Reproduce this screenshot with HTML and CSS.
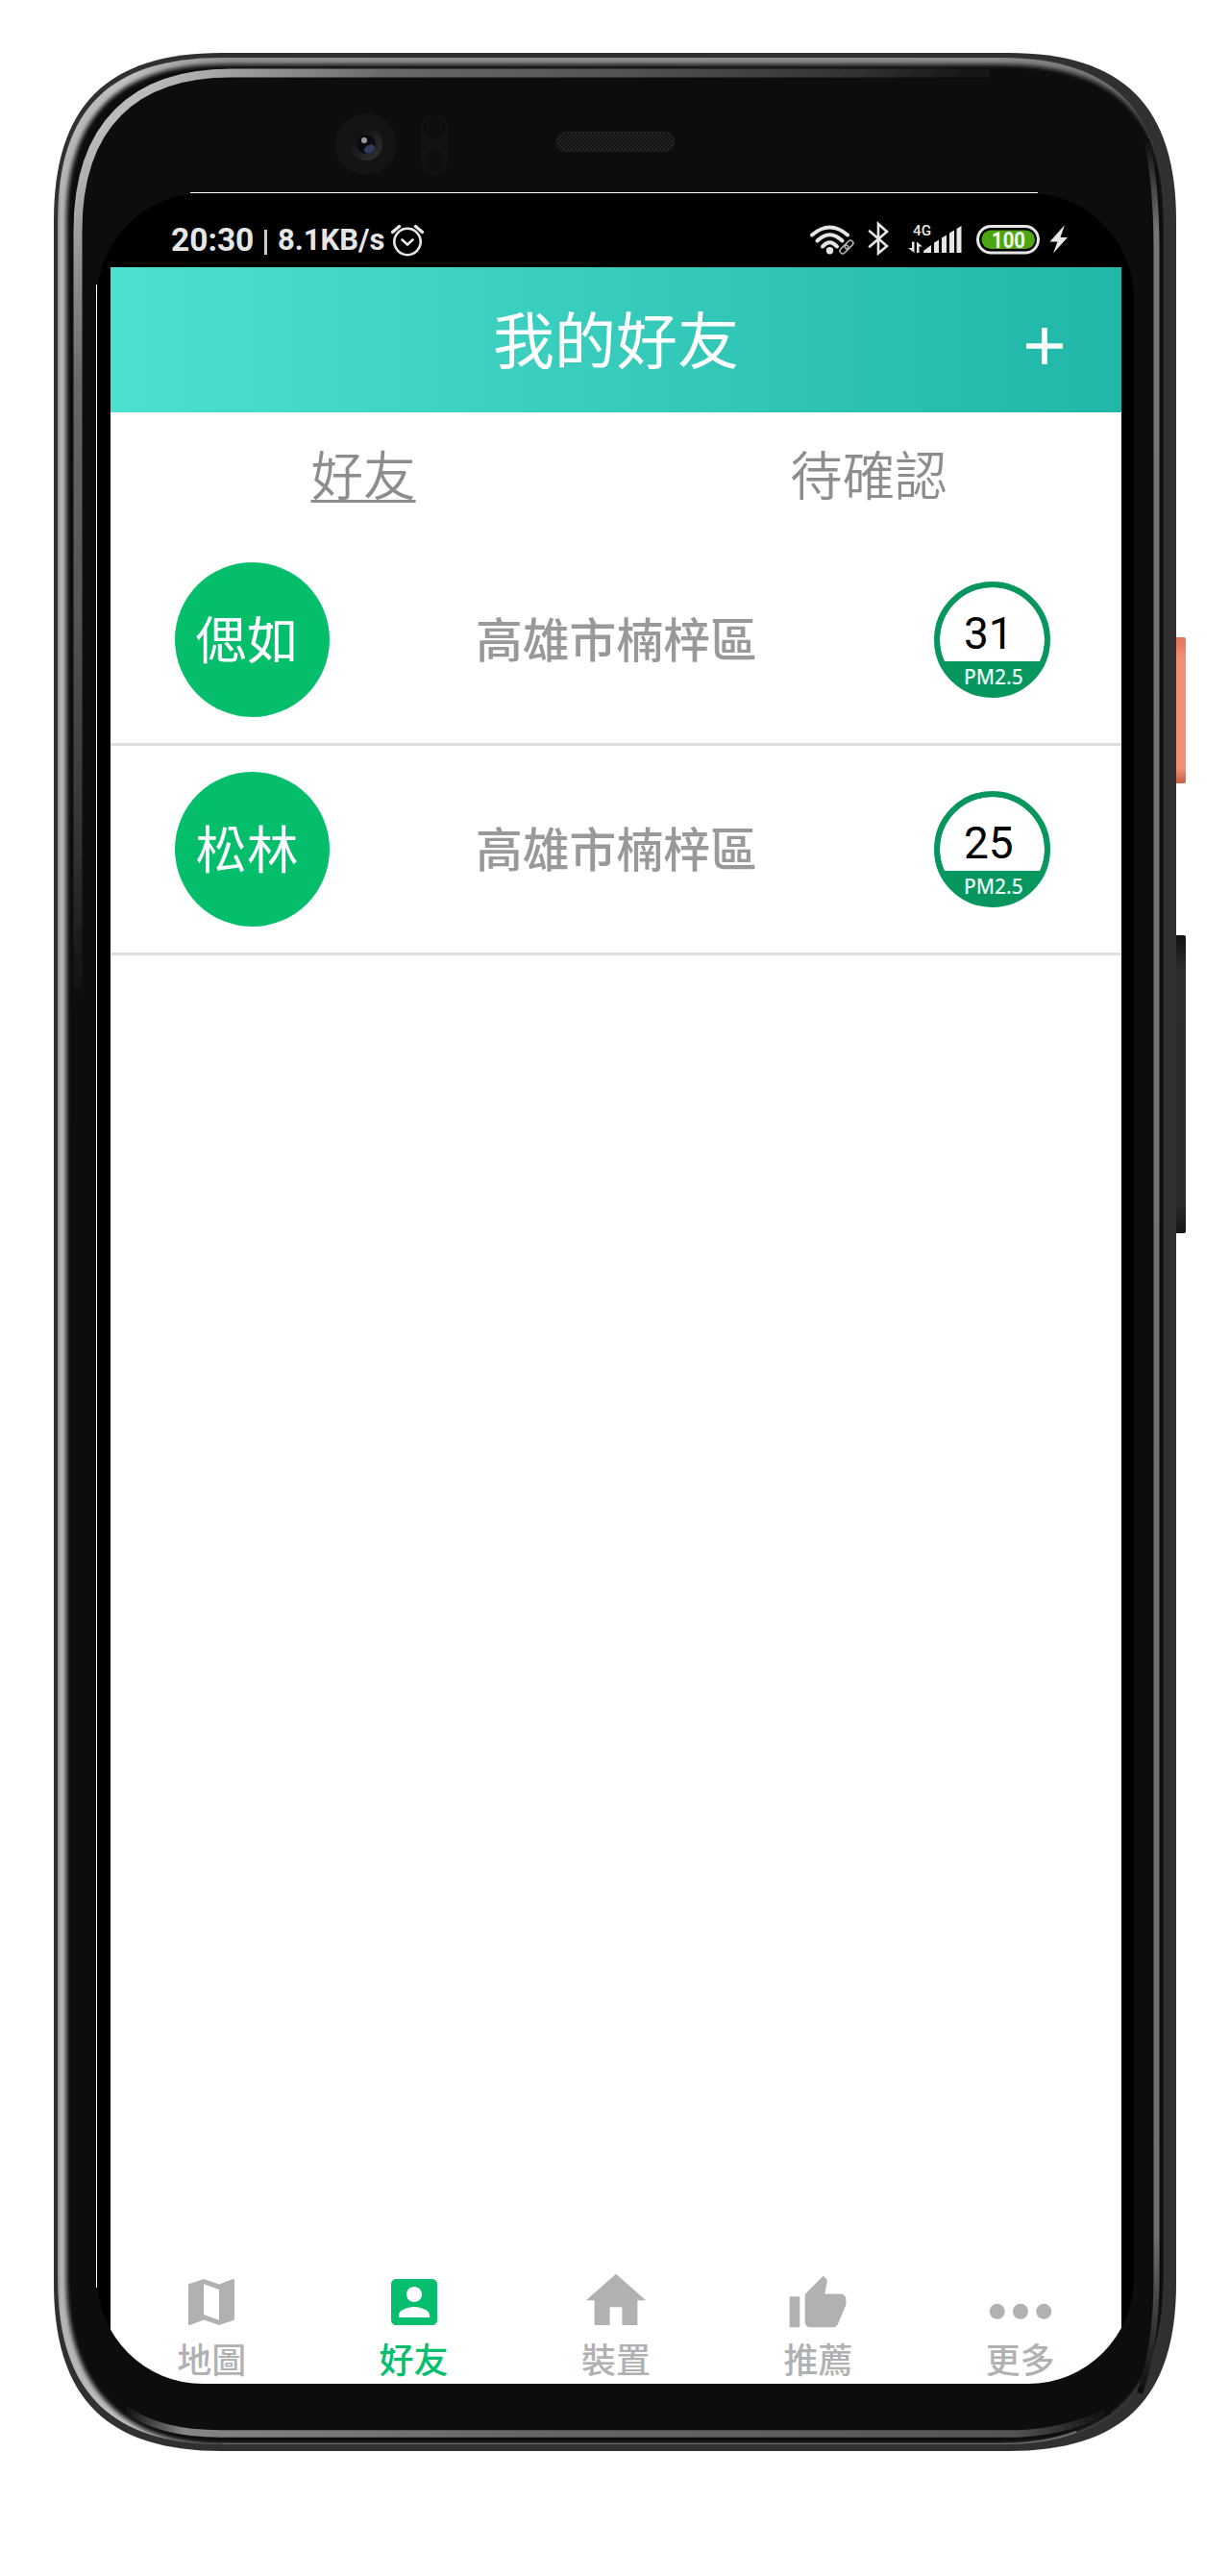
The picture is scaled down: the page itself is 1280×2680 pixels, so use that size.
FILE: index.html
```html
<!DOCTYPE html>
<html lang="zh-Hant">
<head>
<meta charset="utf-8">
<title>我的好友</title>
<link rel="stylesheet" href="styles.css">
</head>
<body>
<div class="stage">
  <svg class="device" viewBox="0 0 1280 2680" aria-hidden="true">
    <defs>
      <linearGradient id="rim" gradientUnits="userSpaceOnUse" x1="60" y1="0" x2="1211" y2="0">
        <stop offset="0" stop-color="#8a8a8a"/><stop offset=".003" stop-color="#b4b4b4"/><stop offset=".06" stop-color="#c0c0c0"/><stop offset=".16" stop-color="#8f8d90"/><stop offset=".85" stop-color="#8a888a"/><stop offset="1" stop-color="#666"/>
      </linearGradient>
      <linearGradient id="shine" gradientUnits="userSpaceOnUse" x1="0" y1="0" x2="600" y2="600">
        <stop offset=".12" stop-color="#8c8c8c"/><stop offset=".2" stop-color="#bcbcbc"/><stop offset=".28" stop-color="#999"/><stop offset=".4" stop-color="#686868"/><stop offset=".6" stop-color="#545454"/><stop offset=".8" stop-color="#333"/><stop offset=".94" stop-color="#0d0d0e"/>
      </linearGradient>
      <linearGradient id="sideShine" gradientUnits="userSpaceOnUse" x1="0" y1="145" x2="0" y2="2490">
        <stop offset="0" stop-color="#0d0d0e"/><stop offset=".04" stop-color="#757577"/><stop offset=".93" stop-color="#707072"/><stop offset=".96" stop-color="#444"/><stop offset="1" stop-color="#0d0d0e"/>
      </linearGradient>
      <linearGradient id="baseShine" gradientUnits="userSpaceOnUse" x1="130" y1="0" x2="1155" y2="0">
        <stop offset="0" stop-color="#0d0d0e"/><stop offset=".06" stop-color="#858585"/><stop offset=".4" stop-color="#666"/><stop offset=".9" stop-color="#555"/><stop offset="1" stop-color="#0d0d0e"/>
      </linearGradient>
      <linearGradient id="power" x1="0" y1="0" x2="0" y2="1">
        <stop offset="0" stop-color="#e6745a"/><stop offset=".15" stop-color="#f08f76"/><stop offset=".9" stop-color="#f08f76"/><stop offset="1" stop-color="#c65f48"/>
      </linearGradient>
      <linearGradient id="volume" x1="0" y1="0" x2="0" y2="1">
        <stop offset="0" stop-color="#121212"/><stop offset=".12" stop-color="#2c2c2c"/><stop offset=".9" stop-color="#2a2a2a"/><stop offset="1" stop-color="#161616"/>
      </linearGradient>
      <linearGradient id="lens" x1="0" y1="0" x2="1" y2="1">
        <stop offset=".2" stop-color="#111112"/><stop offset="1" stop-color="#333337"/>
      </linearGradient>
      <pattern id="mesh" width="4" height="4" patternUnits="userSpaceOnUse">
        <rect width="4" height="4" fill="#111"/><rect width="2" height="2" fill="#242424"/><rect x="2" y="2" width="2" height="2" fill="#242424"/>
      </pattern>
      <filter id="soft2" x="-5%" y="-5%" width="110%" height="110%"><feGaussianBlur stdDeviation="2"/></filter>
      <filter id="soft1" filterUnits="userSpaceOnUse" x="0" y="0" width="1280" height="2680"><feGaussianBlur stdDeviation=".7"/></filter>
      <clipPath id="inner"><path d="M60 230C60 113 115 60 231 60H1042C1158 60 1211 115 1211 230V2370C1211 2488 1158 2543 1042 2543H231C115 2543 60 2488 60 2370Z"/></clipPath>
    </defs>
    <rect x="1216" y="663" width="18" height="152" rx="2" fill="url(#power)"/>
    <rect x="1216" y="973" width="18" height="310" rx="2" fill="url(#volume)"/>
    <path fill="#303030" d="M56 230C56 110 111 55 231 55H1049C1169 55 1224 110 1224 230V2375C1224 2495 1169 2550 1049 2550H231C111 2550 56 2495 56 2375Z"/>
    <g clip-path="url(#inner)">
      <rect x="56" y="55" width="1168" height="2495" fill="url(#rim)"/>
      <path fill="#0d0d0e" filter="url(#soft2)" d="M69 230C69 120 124 67 231 67H1042C1155 68 1213 115 1213 230V2370C1213 2486 1158 2543 1042 2543H231C124 2543 69 2480 69 2370Z"/>
      <path fill="none" stroke="#6c6c6e" stroke-width="2" d="M1120 2530Q1085 2543 1042 2543H231"/>
    </g>
    <g fill="none" filter="url(#soft1)">
      <path stroke="url(#shine)" stroke-width="9" d="M81 1170V240C81 130 140 76 240 76H1030"/>
      <path stroke="url(#sideShine)" stroke-width="6" d="M1193 145Q1203.500 190 1203.500 260V2370Q1203.500 2440 1186 2490"/>
      <path stroke="url(#baseShine)" stroke-width="7.500" d="M130 2506Q165 2532 230 2532H1060Q1110 2530 1155 2508"/>
    </g>
    <circle cx="381" cy="150" r="32" fill="#141414"/>
    <circle cx="381" cy="150" r="17" fill="url(#lens)"/>
    <circle cx="381" cy="150" r="10" fill="#0c0c10"/>
    <ellipse cx="384.500" cy="155" rx="6" ry="4" fill="#303b5c" transform="rotate(-30 384.500 155)" filter="url(#soft1)"/>
    <circle cx="379" cy="146" r="3" fill="#999" filter="url(#soft1)"/>
    <rect x="438" y="120" width="28" height="62" rx="14" fill="#121211"/>
    <circle cx="452" cy="133" r="11" fill="#0e0e0e"/><circle cx="452" cy="168" r="11" fill="#0e0e0e"/>
    <rect x="579.500" y="137.500" width="122" height="20" rx="9" fill="url(#mesh)" stroke="#202020"/>
    <path stroke="#fff" fill="none" d="M198 200.500H1080M100.500 296V2380"/>
  </svg>

  <div class="screen">
    <div class="statusbar">
      <span class="clock">20:30</span><span class="bar"></span><span class="speed">8.1KB/s</span>
      <svg class="alarm" viewBox="0 0 34 34" fill="none" stroke="#e6e6e6" stroke-width="2.600" stroke-linecap="round"><circle cx="17" cy="18.500" r="13.700"/><path d="M11.500 16.500L17 21.500L22.500 16.500"/><path d="M1.500 8.500L8.500 2.500M25.500 2.500L32.500 8.500" stroke-width="3.400"/></svg>
      <svg class="signals" viewBox="0 0 270 40" fill="none" stroke="#e6e6e6" stroke-linecap="round">
        <g stroke-width="4"><path d="M2 14.500Q20.500 -1.500 39 14.500"/><path d="M7.500 20.500Q20.500 8 33.500 20.500"/><path d="M13 26.500Q20.500 18 28 26.500"/></g>
        <circle cx="20.500" cy="30.800" r="3.700" fill="#e6e6e6" stroke="none"/>
        <g stroke-width="1.600" stroke="#b5b5b5" transform="rotate(-45 38 27)"><rect x="29.500" y="24.200" width="10" height="5.600" rx="2.800"/><rect x="36.500" y="24.200" width="10" height="5.600" rx="2.800"/></g>
        <path d="M62 10.500L80 26L71 33.500V3L80 11L62 26.500" stroke-width="2.600" stroke-linejoin="miter"/>
        <text class="net" x="107" y="14.500" textLength="19" lengthAdjust="spacingAndGlyphs">4G</text>
        <g fill="#e6e6e6" stroke="none">
          <path d="M106 21.500h2.500V33L102 28h4zM111 33V21.500l6 5h-3.500V33z"/>
          <path d="M118 33V31L126 25V33zM129 22.500l5-3V33h-5zM137 17.500l5-3V33h-5zM145 12.500l5-3V33h-5zM152.500 8l5-3V33h-5z"/>
        </g>
        <rect x="174.500" y="5.500" width="63" height="27.500" rx="13.700" stroke-width="3"/>
        <rect x="178.500" y="9.500" width="55.500" height="19.500" rx="9.700" fill="#4da512" stroke="none"/>
        <text class="charge" x="189" y="28" textLength="35" lengthAdjust="spacingAndGlyphs">100</text>
        <path fill="#e6e6e6" stroke="none" d="M265 4L249.500 21.500H257.500L253 33.500L268 17H260.500Z"/>
      </svg>
    </div>
    <main class="app">
      <header class="header">
        <h1 class="title">我的好友</h1>
        <svg class="plus" viewBox="0 0 38 38"><path d="M19 0V38M0 19H38" stroke="#fff" stroke-width="5.600"/></svg>
      </header>
      <nav class="tabs"><a class="tab current">好友</a><a class="tab">待確認</a></nav>
      <ul class="friends">
        <li class="friend"><span class="avatar">偲如</span><span class="place">高雄市楠梓區</span><span class="gauge"><b class="value">31</b><small class="unit">PM2.5</small></span></li>
        <li class="friend"><span class="avatar">松林</span><span class="place">高雄市楠梓區</span><span class="gauge"><b class="value">25</b><small class="unit">PM2.5</small></span></li>
      </ul>
      <nav class="dock">
        <a class="item"><svg viewBox="0 0 24 24"><path d="M20.500 3l-.16.03L15 5.100 9 3 3.360 4.900c-.21.07-.36.25-.36.48V20.500c0 .28.22.5.5.5l.16-.03L9 18.900l6 2.100 5.640-1.900c.21-.07.36-.25.36-.48V3.500c0-.28-.22-.5-.5-.5zM15 19l-6-2.110V5l6 2.110V19z"/></svg><span class="label">地圖</span></a>
        <a class="item active"><svg viewBox="0 0 24 24"><path d="M3 5v14c0 1.100.89 2 2 2h14c1.100 0 2-.9 2-2V5c0-1.100-.9-2-2-2H5c-1.110 0-2 .9-2 2zm12 4c0 1.660-1.340 3-3 3s-3-1.340-3-3 1.340-3 3-3 3 1.340 3 3zm-9 8c0-2 4-3.100 6-3.100s6 1.100 6 3.100v1H6v-1z"/></svg><span class="label">好友</span></a>
        <a class="item"><svg viewBox="0 0 24 24"><path d="M9.600 21V14h4.800v7h6V11.300H23.700L12 1 .3 11.300H3.600V21z"/></svg><span class="label">裝置</span></a>
        <a class="item"><svg viewBox="0 0 24 24"><path transform="translate(0 .8)" d="M1 21h4V9H1v12zm22-11c0-1.100-.9-2-2-2h-6.310l.95-4.570.03-.32c0-.41-.17-.79-.44-1.060L14.170 1 7.590 7.590C7.220 7.950 7 8.450 7 9v10c0 1.100.9 2 2 2h9c.83 0 1.540-.5 1.840-1.220l3.020-7.050c.09-.23.14-.47.14-.73v-2z"/></svg><span class="label">推薦</span></a>
        <a class="item"><svg viewBox="0 0 24 24"><circle cx="2.900" cy="15.700" r="3"/><circle cx="12" cy="15.700" r="3"/><circle cx="21.100" cy="15.700" r="3"/></svg><span class="label">更多</span></a>
      </nav>
    </main>
  </div>
</div>
</body>
</html>
```
FILE: styles.css
```css
* { box-sizing: border-box; margin: 0; padding: 0; }
body { background: #fff; font-family: Roboto, "Noto Sans CJK TC", sans-serif; }
.stage { display: grid; width: 1280px; height: 2680px; overflow: hidden; }
.device { grid-area: 1 / 1; width: 1280px; height: 2680px; }
.screen {
  grid-area: 1 / 1; margin: 201px 0 0 101px; width: 1079px; height: 2279px;
  background: #000; border-radius: 110px; overflow: hidden;
  display: flex; flex-direction: column; z-index: 1;
}
.statusbar {
  height: 77px; flex: none; display: flex; align-items: center;
  padding: 20px 67px 0 77px; color: #e6e6e6; font-size: 33.5px; font-weight: 700; line-height: 38px;
}
.clock { width: 88px; }
.bar { width: 3px; height: 26px; background: #ccc; margin: 4px 11px 0 9px; flex: none; }
.speed { width: 118px; font-size: 31px; white-space: nowrap; }
.alarm { width: 34px; height: 34px; flex: none; }
.signals { width: 270px; height: 40px; margin-left: auto; flex: none; }
.net { font: 500 15.500px Roboto, sans-serif; fill: #e6e6e6; stroke: none; }
.charge { font: 700 24px Roboto, sans-serif; fill: #f4fbe9; stroke: none; }
.app { flex: 1; width: 1052px; margin-left: 14px; background: #fff; display: flex; flex-direction: column; }
.header {
  height: 151px; padding: 6px 61px 0; display: grid; grid-template-columns: 1fr auto 1fr; align-items: center;
  background: linear-gradient(90deg, #4be0cf, #36cbbb 50%, #20b7a8);
}
.title { grid-column: 2; color: #fff; font-size: 64px; font-weight: 400; line-height: 90px; }
.plus { width: 38px; height: 38px; justify-self: end; margin-top: 6px; }
.tabs { height: 129px; padding-top: 5px; display: grid; grid-template-columns: 1fr 1fr; align-items: center; text-align: center; color: #8d8d8d; }
.tab { font-size: 54.500px; font-weight: 350; line-height: 80px; }
.current { text-decoration: underline; text-decoration-thickness: 3px; text-underline-offset: 5px; }
.friends { list-style: none; }
.friend { height: 218px; display: flex; align-items: center; padding: 0 74px 0 67px; border-bottom: 3px solid #dfdfdf; }
.avatar {
  width: 161px; height: 161px; border-radius: 50%; background: #04be6c; color: #fff;
  display: grid; place-items: center; padding: 5px 11px 0 0; font-size: 53.500px; line-height: 78px; white-space: nowrap;
}
.place { margin: 4px 0 0 152px; font-size: 48.800px; font-weight: 500; color: #999; line-height: 70px; }
.gauge {
  width: 121px; height: 121px; margin-left: auto; border: 6px solid #08965f; border-radius: 50%;
  display: flex; flex-direction: column; background: linear-gradient(#fff 77px, #08965f 77px) padding-box, #08965f border-box;
}
.value { flex: none; height: 77px; padding: 21px 0 0 25px; font-size: 46px; font-weight: 400; line-height: 54px; color: #000; }
.unit {
  flex: 1; color: #eafff6; padding-left: 25px;
  font: 500 21px/32px "Noto Sans", sans-serif;
}
.dock { margin-top: auto; display: grid; grid-template-columns: repeat(5, 1fr); color: #b1b1b1; }
.item { display: flex; flex-direction: column; align-items: center; height: 117px; }
.item svg { width: 64px; height: 64px; fill: currentColor; overflow: visible; flex: none; }
.label { font-size: 36px; font-weight: 500; line-height: 48px; margin-top: 6px; }
.active { color: #07be6e; }
```
